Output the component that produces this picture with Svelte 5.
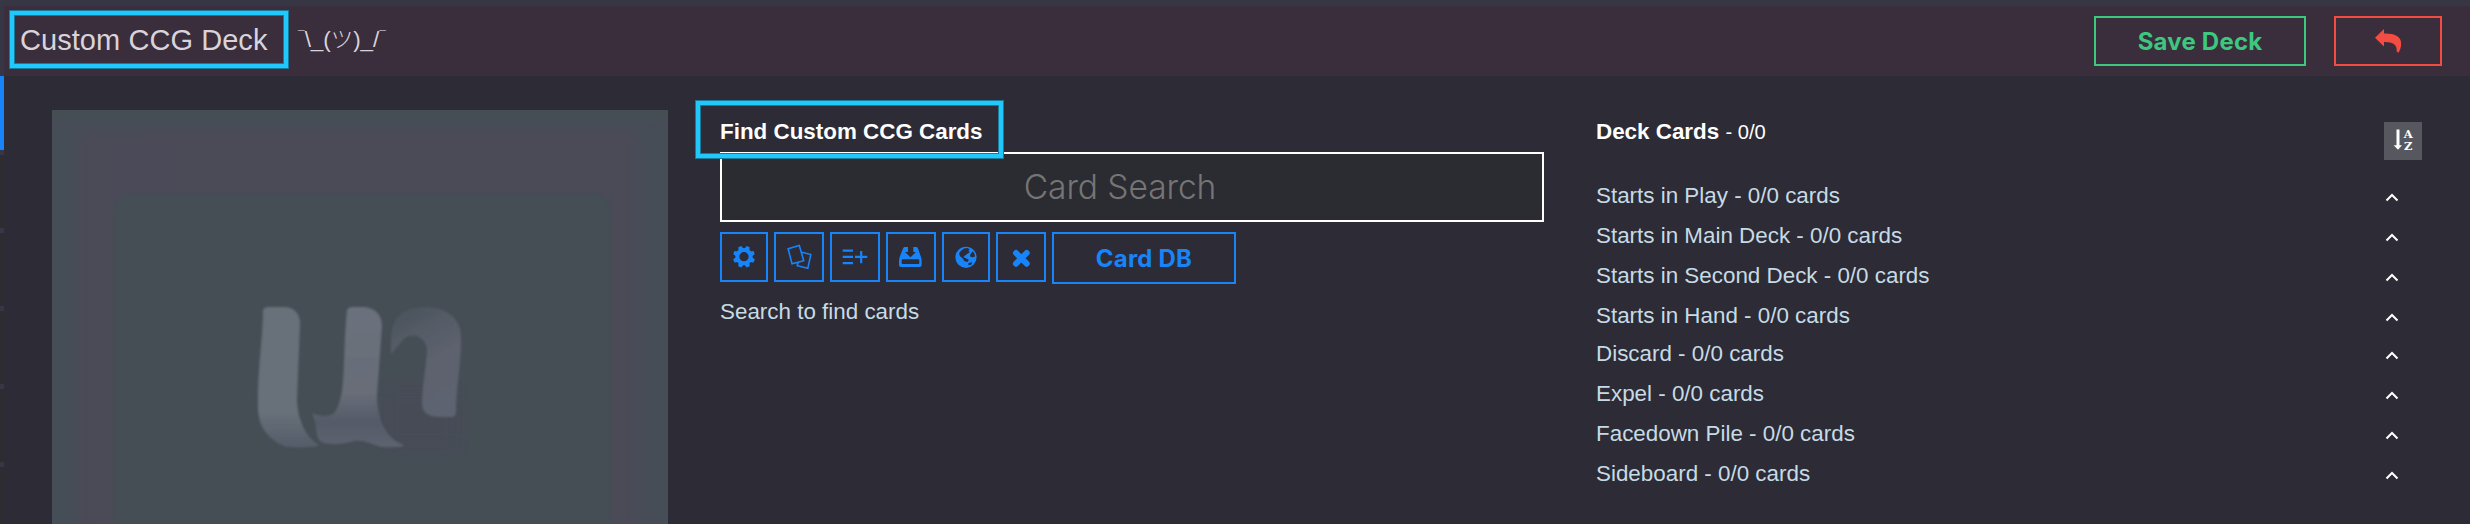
<script>
  const piles = [
    'Starts in Play', 'Starts in Main Deck', 'Starts in Second Deck', 'Starts in Hand',
    'Discard', 'Expel', 'Facedown Pile', 'Sideboard'
  ];
  const teeth = [0, 45, 90, 135, 180, 225, 270, 315];
  const tabs = [1, 2, 3, 4, 5];
</script>

<div class="page">
  <aside>
    <div class="active"></div>
    {#each tabs as tab (tab)}<div class="tab"></div>{/each}
  </aside>
  <div class="content">
    <header>
      <div class="title"><span class="name">Custom CCG Deck</span><span class="mark"></span></div>
      <span class="shrug"><i>¯</i>\_(ツ)_/<i>¯</i></span>
      <button class="save">Save Deck</button>
      <button class="undo" aria-label="Back">
        <svg width="26" height="24" viewBox="0 0 26 24"><path d="M0 8.7L9 0V4.6C20.500 4.200 26 8 26.200 14.500C26.200 18 25 21 23.600 23.700L21.600 22.500C22.400 16.300 18.500 12.800 9 13.100V17.500Z" fill="#f34c43" /></svg>
      </button>
    </header>
    <main>
      <svg class="card" width="616" height="414" viewBox="0 0 616 414">
        <defs>
          <linearGradient id="edge" x2="1" y2="0"><stop offset="0" stop-color="#454e56" /><stop offset=".03" stop-color="#464d56" /><stop offset=".055" stop-color="#4a4a56" /><stop offset=".1" stop-color="#4b4a58" /><stop offset=".93" stop-color="#4b4a57" /><stop offset=".96" stop-color="#474c57" /><stop offset="1" stop-color="#454d56" /></linearGradient>
          <linearGradient id="top" x2="0" y2="1"><stop offset="0" stop-color="#454e54" /><stop offset=".4" stop-color="#464d56" /><stop offset="1" stop-color="#484b57" stop-opacity="0" /></linearGradient>
          <linearGradient id="u" x2="0" y2="1"><stop offset="0" stop-color="#687079" /><stop offset=".75" stop-color="#687079" /><stop offset="1" stop-color="#545d69" /></linearGradient>
          <linearGradient id="mid" x2="0" y2="1"><stop offset="0" stop-color="#6b717c" /><stop offset=".62" stop-color="#676d78" /><stop offset=".82" stop-color="#545b68" /><stop offset="1" stop-color="#5e6470" /></linearGradient>
          <linearGradient id="n" x2=".35" y2="1"><stop offset="0" stop-color="#485159" /><stop offset=".3" stop-color="#535b65" /><stop offset=".6" stop-color="#5d626e" /><stop offset="1" stop-color="#5d636f" /></linearGradient>
          <filter id="soft"><feGaussianBlur stdDeviation="1.2" /></filter>
          <filter id="glow"><feGaussianBlur stdDeviation="8" /></filter>
        </defs>
        <rect width="616" height="414" fill="url(#edge)" />
        <rect width="616" height="32" fill="url(#top)" />
        <rect x="62" y="83" width="497" height="360" rx="18" fill="#444d55" filter="url(#soft)" />
        <path d="M330 275H410V340H330Z" fill="#474c56" filter="url(#glow)" />
        <g filter="url(#soft)">
          <path d="M211 200Q212 197 217 197H235Q248 200 248 214L245 290C246 313 256 329 267 335Q265 338 234 337C215 329 206 316 206 297C205 260 211 230 211 200Z" fill="url(#u)" />
          <path d="M295 200Q296 197 301 197H313Q330 200 330 216L325 285C325 314 337 330 352 335Q352 338 330 337C317 334 313 330 303 331Q284 336 272 333C262 330 267 320 260 303C271 308 280 306 283 302C295 283 290 250 295 200Z" fill="url(#mid)" />
          <path d="M339 244C338 212 343 197 375 197C397 198 410 210 409 230C409 255 404 279 404 303Q404 307 399 307H388Q369 307 370 292C371 270 374 258 375 239C372 224 356 220 347 235Z" fill="url(#n)" />
        </g>
      </svg>

      <section class="find">
        <h2>Find Custom CCG Cards<span class="mark"></span></h2>
        <div class="search"><input placeholder="Card Search" aria-label="Card Search" /></div>
        <div class="tools">
          <button class="narrow" aria-label="Settings"><svg width="44" height="46" viewBox="0 0 44 46">
            <circle cx="22" cy="22.700" r="6.600" fill="none" stroke="#1784fa" stroke-width="4" />
            {#each teeth as a (a)}<path d="M19.300 15.500L20.300 11.700H23.700L24.700 15.500Z" fill="#1784fa" transform="rotate({a + 22.5} 22 22.700)" />{/each}
          </svg></button>
          <button aria-label="Cards"><svg width="46" height="46" viewBox="0 0 46 46" fill="none" stroke="#1784fa" stroke-width="1.600">
            <path d="M12.100 14.700L23.300 11.600L27.700 26.700L16 29.700ZM26 18.300L34.800 20.600L31.800 34.300L21.300 31.700L22.100 28.200" />
          </svg></button>
          <button aria-label="Add list"><svg width="46" height="46" viewBox="0 0 46 46" fill="none" stroke="#1784fa" stroke-width="2.200">
            <path d="M10.700 16.700H21M10.700 22.900H21M10.700 29.100H21M23 22.900H35.300M29.200 17V29.200" />
          </svg></button>
          <button aria-label="Import"><svg width="46" height="46" viewBox="0 0 46 46">
            <path fill="#1784fa" fill-rule="evenodd" d="M16.500 13H20V18H17L22.500 23.300L28 18H25.300V13H28.500Q29.500 13 30 14.500L33 23Q33.700 25 33.700 27V31Q33.700 33 31.700 33H13Q11 33 11 31V27Q11 25 11.700 23L15 14.500Q15.500 13 16.500 13ZM14.700 25.300Q13.700 25.300 13.700 26.300V29Q13.700 30 14.700 30H30.300Q31.300 30 31.300 29V26.300Q31.300 25.300 30.300 25.300Z" />
          </svg></button>
          <button class="narrow" aria-label="Web"><svg width="44" height="46" viewBox="0 0 44 46">
            <circle cx="22" cy="23.300" r="10.600" fill="#1784fa" />
            <path fill="#2d2b35" d="M16.500 17.300L20 14.500L23.500 14L25.800 15.500L24.200 17L26 18L23.500 19.800L21 21.500L19.400 23L22.300 24.500L24.800 25.800L23.500 28L20.500 27.200L18.700 24.500L15.800 22L15.200 19.300ZM26.300 20.500L28.500 17.500L30.300 19L31 22.500L28.700 23.200L26 22.500ZM24.500 29L28.300 28.200L27.300 30.700L24.300 31.200Z" />
          </svg></button>
          <button aria-label="Clear"><svg width="46" height="46" viewBox="0 0 46 46">
            <path d="M18 19L28.700 29.700M28.700 19L18 29.700" stroke="#1784fa" stroke-width="6" stroke-linecap="round" />
          </svg></button>
          <button class="db">Card DB</button>
        </div>
        <p>Search to find cards</p>
      </section>

      <section class="deck">
        <div class="deckhead">
          <h2>Deck Cards <small>- 0/0</small></h2>
          <button class="sort" aria-label="Sort A to Z"><svg width="38" height="38" viewBox="0 0 38 38" fill="#fff">
            <path d="M12.500 7.500H15.500V23.300H18L14 27.700L9.700 23.300H12.500Z" />
            <text x="24.100" y="16">A</text><text x="24.100" y="27.800">Z</text>
          </svg></button>
        </div>
        <ul>
          {#each piles as pile (pile)}
            <li><span>{pile} - 0/0 cards</span><svg width="14" height="9" viewBox="0 0 14 9"><path d="M1.500 7.500L7 2L12.500 7.500" fill="none" stroke="#fff" stroke-width="2" /></svg></li>
          {/each}
        </ul>
      </section>
    </main>
  </div>
</div>

<style>
  :global(body) { margin: 0; background: #2d2b35; }
  * { box-sizing: border-box; }
  .page { display: flex; width: 2470px; height: 524px; overflow: hidden; padding-top: 6px; background: linear-gradient(#373644 6px, #2d2b35 6px); font-family: "Liberation Sans", "Noto Sans CJK JP", sans-serif; font-size: 22.4px; color: #c6dbe5; }
  aside { width: 4px; flex: none; padding-top: 70px; background: #373644; }
  .active { height: 74px; background: #1784fa; }
  .tab { height: 73px; margin-top: 5px; background: #2d2c31; }
  .content { flex: 1; min-width: 0; }
  header { display: flex; align-items: center; height: 70px; padding-right: 28px; background: #3a2d3c; color: #d9d3da; }
  .title { position: relative; width: 294px; padding-left: 16px; line-height: 68px; font-size: 29px; letter-spacing: .06px; white-space: nowrap; }
  .name { position: relative; top: -1px; }
  .mark { position: absolute; border: 4px solid #21c8fb; box-shadow: 0 0 0 1px #1c7998, inset 0 0 0 1px #1c7998; }
  .title .mark { left: 6px; top: 4px; width: 278px; height: 57px; }
  .shrug { flex: 1; font-family: "Liberation Sans", "Noto Sans CJK JP", sans-serif; font-weight: 300; line-height: 30px; padding-bottom: 3px; white-space: nowrap; }
  .shrug i { font-style: normal; font-size: 12px; line-height: 12px; vertical-align: 7px; }
  button { display: grid; place-items: center; margin: 0; padding: 0; background: transparent; border: 2px solid #1784fa; width: 50px; height: 50px; font: 700 24px Inter, sans-serif; letter-spacing: .2px; color: #1784fa; flex: none; }
  button svg { display: block; }
  .save { width: 212px; border-color: #3dc77f; color: #3dc77f; margin-right: 28px; }
  .undo { width: 108px; border-color: #f34c43; }
  main { display: flex; padding: 34px 48px 0; }
  .card { flex: none; display: block; }
  .find { width: 824px; margin-left: 52px; padding-top: 6px; flex: none; }
  h2 { position: relative; margin: 0; height: 36px; line-height: 32px; font-size: 22.4px; color: #fff; white-space: nowrap; }
  h2 .mark { left: -24px; top: -15px; width: 307px; height: 57px; }
  .search { height: 70px; border: 2px solid #fff; background: #2b2b32; }
  input { display: block; width: 100%; height: 66px; padding: 0 24px 1px 0; border: 0; background: none; text-align: center; font: 300 33.600px Inter, sans-serif; letter-spacing: -.1px; }
  input::placeholder { color: #757575; opacity: 1; }
  .tools { display: flex; gap: 6px; margin-top: 10px; height: 60px; }
  .narrow { width: 48px; }
  .db { width: 184px; height: 52px; }
  p { margin: 0; line-height: 40px; }
  .deck { flex: 1; margin-left: 52px; padding-top: 6px; }
  .deckhead { display: flex; justify-content: space-between; }
  small { font-size: 20.200px; font-weight: 400; }
  .sort { width: 38px; height: 38px; margin-top: 6px; border: 0; background: #57575f; }
  .sort text { font: bold 11.500px "DejaVu Serif", serif; letter-spacing: 0; text-anchor: middle; }
  ul { list-style: none; margin: 16px 0 0; padding: 0; }
  li { display: flex; align-items: center; justify-content: space-between; height: 40px; padding-right: 23px; line-height: 40px; }
  li:nth-child(4) { height: 38px; align-items: flex-start; }
  li svg { display: block; margin-top: 3px; }
  li:nth-child(4) svg { margin-top: 17px; }
</style>
